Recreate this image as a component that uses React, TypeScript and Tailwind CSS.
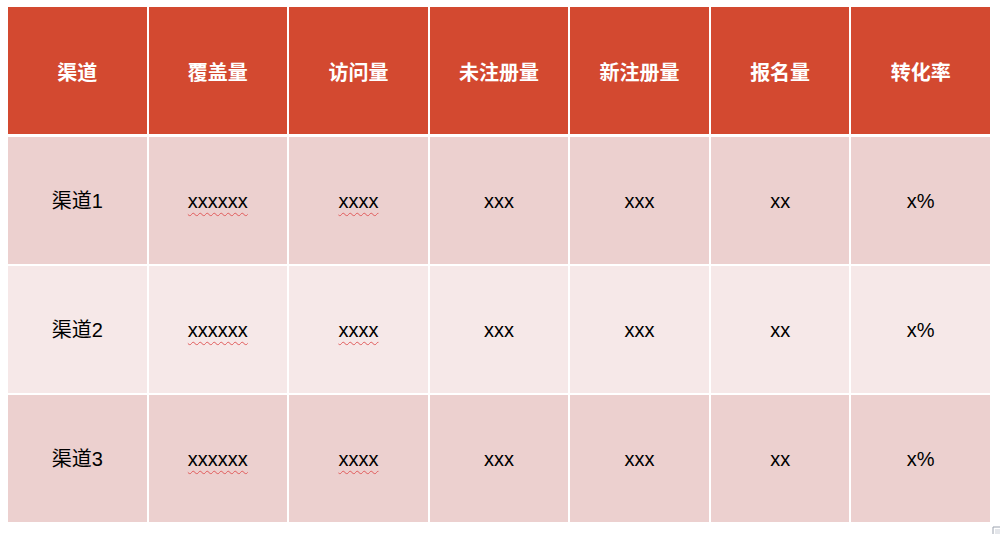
const headers = ["渠道", "覆盖量", "访问量", "未注册量", "新注册量", "报名量", "转化率"];

const rows = [
  ["渠道1", "xxxxxx", "xxxx", "xxx", "xxx", "xx", "x%"],
  ["渠道2", "xxxxxx", "xxxx", "xxx", "xxx", "xx", "x%"],
  ["渠道3", "xxxxxx", "xxxx", "xxx", "xxx", "xx", "x%"],
];

const font = { fontFamily: '"Liberation Sans", "Noto Sans CJK SC", sans-serif' };

export default function App() {
  return (
    <div className="relative w-[1000px] h-[534px] bg-white pt-[7px] pl-[8px]" style={font}>
      <div className="w-[982px] flex flex-col">
        <div className="grid grid-cols-7 gap-x-[2px] h-[127px] mb-[3px]">
          {headers.map((h) => (
            <div
              key={h}
              className="bg-[#d34930] text-white font-bold text-[20px] pt-[5px] flex items-center justify-center"
            >
              {h}
            </div>
          ))}
        </div>
        <div className="flex flex-col gap-y-[2px]">
          {rows.map((r, i) => (
            <div key={i} className="grid grid-cols-7 gap-x-[2px] h-[127px]">
              {r.map((c, j) => (
                <div
                  key={j}
                  className={`${i === 1 ? "bg-[#f6e8e8]" : "bg-[#ecd0cf]"} text-black text-[20px] flex items-center justify-center`}
                >
                  {j === 1 || j === 2 ? (
                    <span className="underline decoration-wavy decoration-[#e05a5a] decoration-1 underline-offset-4">
                      {c}
                    </span>
                  ) : (
                    c
                  )}
                </div>
              ))}
            </div>
          ))}
        </div>
      </div>
      <svg className="absolute left-[992px] top-[526px]" width="8" height="8" viewBox="0 0 8 8">
        <path d="M1 8 V1 H8" fill="none" stroke="#9ca3af" strokeWidth="1" />
        <rect x="3" y="3" width="5" height="5" fill="#e5e7eb" />
      </svg>
    </div>
  );
}
